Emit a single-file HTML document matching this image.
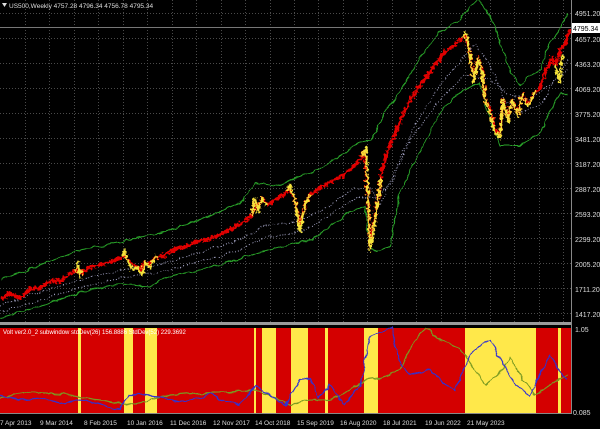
<!DOCTYPE html>
<html><head><meta charset="utf-8"><style>
html,body{margin:0;padding:0;background:#000;width:600px;height:429px;overflow:hidden}
svg{display:block}
text{font-family:"Liberation Sans",sans-serif}
</style></head><body>
<svg width="600" height="429" viewBox="0 0 600 429" xmlns="http://www.w3.org/2000/svg">
<defs>
<filter id="j" x="-5%" y="-5%" width="110%" height="110%">
<feTurbulence type="fractalNoise" baseFrequency="0.35" numOctaves="2" seed="3" result="n"/>
<feDisplacementMap in="SourceGraphic" in2="n" scale="7" xChannelSelector="R" yChannelSelector="G"/>
</filter>
<filter id="j2" x="-5%" y="-5%" width="110%" height="110%">
<feTurbulence type="fractalNoise" baseFrequency="0.12" numOctaves="2" seed="5" result="n"/>
<feDisplacementMap in="SourceGraphic" in2="n" scale="5" xChannelSelector="R" yChannelSelector="G"/>
</filter>
</defs>
<rect width="600" height="429" fill="#000"/>
<rect x="0" y="328" width="571" height="85" fill="#d40000"/>
<g fill="#ffe84a">
<rect x="78" y="328" width="3" height="85"/>
<rect x="124" y="328" width="9" height="85"/>
<rect x="145" y="328" width="12" height="85"/>
<rect x="254" y="328" width="2" height="85"/>
<rect x="262" y="328" width="14" height="85"/>
<rect x="291" y="328" width="17" height="85"/>
<rect x="325" y="328" width="3" height="85"/>
<rect x="364" y="328" width="14" height="85"/>
<rect x="465" y="328" width="71" height="85"/>
<rect x="558" y="328" width="3" height="85"/>
</g>
<g stroke="#4a4a4a" stroke-width="1" stroke-dasharray="1,2">
<line x1="0" y1="13.5" x2="571" y2="13.5"/><line x1="0" y1="38.5" x2="571" y2="38.5"/><line x1="0" y1="63.5" x2="571" y2="63.5"/><line x1="0" y1="88.5" x2="571" y2="88.5"/><line x1="0" y1="113.5" x2="571" y2="113.5"/><line x1="0" y1="138.5" x2="571" y2="138.5"/><line x1="0" y1="163.5" x2="571" y2="163.5"/><line x1="0" y1="188.5" x2="571" y2="188.5"/><line x1="0" y1="213.5" x2="571" y2="213.5"/><line x1="0" y1="238.5" x2="571" y2="238.5"/><line x1="0" y1="263.5" x2="571" y2="263.5"/><line x1="0" y1="288.5" x2="571" y2="288.5"/><line x1="0" y1="313.5" x2="571" y2="313.5"/>
<line x1="25.5" y1="0" x2="25.5" y2="322"/><line x1="49.5" y1="0" x2="49.5" y2="322"/><line x1="74.5" y1="0" x2="74.5" y2="322"/><line x1="98.5" y1="0" x2="98.5" y2="322"/><line x1="123.5" y1="0" x2="123.5" y2="322"/><line x1="147.5" y1="0" x2="147.5" y2="322"/><line x1="172.5" y1="0" x2="172.5" y2="322"/><line x1="196.5" y1="0" x2="196.5" y2="322"/><line x1="221.5" y1="0" x2="221.5" y2="322"/><line x1="245.5" y1="0" x2="245.5" y2="322"/><line x1="270.5" y1="0" x2="270.5" y2="322"/><line x1="294.5" y1="0" x2="294.5" y2="322"/><line x1="318.5" y1="0" x2="318.5" y2="322"/><line x1="343.5" y1="0" x2="343.5" y2="322"/><line x1="367.5" y1="0" x2="367.5" y2="322"/><line x1="392.5" y1="0" x2="392.5" y2="322"/><line x1="416.5" y1="0" x2="416.5" y2="322"/><line x1="441.5" y1="0" x2="441.5" y2="322"/><line x1="465.5" y1="0" x2="465.5" y2="322"/><line x1="490.5" y1="0" x2="490.5" y2="322"/><line x1="514.5" y1="0" x2="514.5" y2="322"/><line x1="539.5" y1="0" x2="539.5" y2="322"/><line x1="563.5" y1="0" x2="563.5" y2="322"/>
</g>
<line x1="0" y1="27.5" x2="571" y2="27.5" stroke="#777" stroke-width="1"/>
<g fill="none" stroke-width="1" filter="url(#j2)">
<polyline stroke="#2aa52a" points="0,280 40,265 80,250 120,242 160,233 200,220 240,203 255,183 280,186 300,176 320,169 340,156 360,142 372,140 385,112 400,92 420,57 440,32 460,20 470,6 478,0 490,15 500,42 510,70 520,86 530,76 540,70 550,42 560,30 568,14"/>
<polyline stroke="#2aa52a" points="0,318 40,306 80,292 120,284 150,286 170,276 200,270 240,259 260,252 300,242 312,240 330,226 350,212 365,206 370,246 376,252 390,246 400,192 420,152 440,112 460,92 480,82 490,120 500,146 520,146 540,132 550,112 560,92 568,96"/>
<polyline stroke="#aaaacc" stroke-dasharray="1,2" points="0,305 40,292 80,280 120,270 160,265 200,252 240,240 265,225 300,222 330,205 355,188 370,188 380,205 395,170 415,125 440,85 460,62 475,45 490,65 505,100 520,112 540,105 555,80 568,60"/>
<polyline stroke="#aaaacc" stroke-dasharray="1,2" points="0,312 40,300 80,288 120,278 160,272 200,262 240,250 265,238 300,232 330,216 355,198 375,198 390,185 410,140 440,100 465,75 490,80 510,95 530,100 550,85 568,70"/>
</g>
<g filter="url(#j)">
<polyline fill="none" stroke="#e00000" stroke-width="3.2" stroke-linejoin="round" points="0,300 10,293 20,298 30,289 40,288 50,281 60,281 70,274 78,268 80,275 90,267 100,265 110,262 120,258 125,255 130,262 140,270 145,262 150,265 155,258 165,255 175,249 185,247 195,242 205,240 215,237 225,232 235,227 245,221 252,215 255,200 258,210 262,198 268,205 275,200 285,194 290,188 295,200 300,228 305,205 310,195 320,188 330,182 340,177 350,170 360,160 365,150 368,195 370,248 374,225 378,198 382,170 388,150 395,134 405,110 415,92 425,79 435,65 445,52 455,45 462,38 466,35 470,55 474,80 478,58 482,70 485,100 490,110 495,130 500,135 503,100 508,120 512,100 518,115 522,95 528,105 533,95 540,88 545,72 552,58 556,65 560,50 565,44 570,30"/>
<g fill="none" stroke="#f4e23a" stroke-width="2.4" stroke-linejoin="round">
<polyline points="76,270 78,262 80,278 82,270"/>
<polyline points="122,256 125,250 128,262 132,270 138,268 142,275 145,262 150,268 155,258 158,256"/>
<polyline points="252,215 255,198 258,212 262,198 266,206"/>
<polyline points="287,190 290,185 295,200 300,232 305,205 310,195"/>
<polyline points="362,156 366,148 368,195 370,250 374,228 378,198 381,178"/>
<polyline points="462,38 466,33 470,55 474,82 478,58 482,72 485,100 490,112 495,132 500,138 503,100 508,122 512,100 518,116 522,95 528,106 533,95 536,92"/>
<polyline points="555,66 558,75 560,82 562,55"/>
</g>
</g>
<rect x="0" y="322" width="572" height="3" fill="#9a9a9a"/>
<g filter="url(#j2)">
<polyline fill="none" stroke="#7a9a20" stroke-width="1.2" points="0,398 30,392 60,394 80,397 100,400 130,405 150,400 170,395 200,393 230,392 255,390 270,395 290,405 310,400 330,400 350,390 365,380 380,378 400,370 415,340 425,328 440,340 460,348 475,370 485,385 500,373 510,358 520,375 535,395 550,385 568,375"/>
<polyline fill="none" stroke="#3030d0" stroke-width="1.2" points="0,395 20,400 40,398 60,403 80,400 100,405 120,410 128,395 140,395 160,397 180,402 200,398 210,393 220,400 240,405 255,385 270,395 285,405 300,380 310,378 318,398 330,385 345,405 360,385 365,360 370,337 380,333 392,326 400,365 410,375 430,370 445,385 455,390 470,355 480,345 490,340 500,358 515,385 530,395 550,355 560,372 568,380"/>
</g>
<text x="3" y="334" font-size="6" fill="#fff">Volt ver2.0_2 subwindow  stdDev(26) 156.8886  StdDev(52) 229.3692</text>
<line x1="571.5" y1="0" x2="571.5" y2="414" stroke="#888"/>
<line x1="0" y1="413.5" x2="572" y2="413.5" stroke="#888"/>
<g font-size="7" fill="#ddd">
<text x="575" y="16">4951.20</text>
<text x="575" y="67">4363.20</text>
<text x="575" y="92">4069.20</text>
<text x="575" y="117">3775.20</text>
<text x="575" y="142">3481.20</text>
<text x="575" y="167">3187.20</text>
<text x="575" y="192">2887.20</text>
<text x="575" y="217">2593.20</text>
<text x="575" y="242">2299.20</text>
<text x="575" y="267">2005.20</text>
<text x="575" y="292">1711.20</text>
<text x="575" y="317">1417.20</text>
<text x="575" y="332">1.05</text>
<text x="573" y="415">0.085</text>
</g>
<rect x="572" y="23" width="28" height="10" fill="#fff"/>
<text x="573" y="31" font-size="7" fill="#000">4795.34</text>
<rect x="572" y="35" width="28" height="8" fill="#000"/>
<text x="575" y="42" font-size="7" fill="#ddd">4657.20</text>
<g font-size="6.5" fill="#ddd">
<text x="0" y="425">7 Apr 2013</text>
<text x="40" y="425">9 Mar 2014</text>
<text x="84" y="425">8 Feb 2015</text>
<text x="127" y="425">10 Jan 2016</text>
<text x="170" y="425">11 Dec 2016</text>
<text x="213" y="425">12 Nov 2017</text>
<text x="255" y="425">14 Oct 2018</text>
<text x="297" y="425">15 Sep 2019</text>
<text x="340" y="425">16 Aug 2020</text>
<text x="383" y="425">18 Jul 2021</text>
<text x="425" y="425">19 Jun 2022</text>
<text x="467" y="425">21 May 2023</text>
</g>
<path d="M2,3 L7,3 L4.5,7 Z" fill="#ddd"/>
<text x="9" y="8" font-size="6.5" fill="#ddd">US500,Weekly  4757.28 4796.34 4756.78 4795.34</text>
</svg>
</body></html>
